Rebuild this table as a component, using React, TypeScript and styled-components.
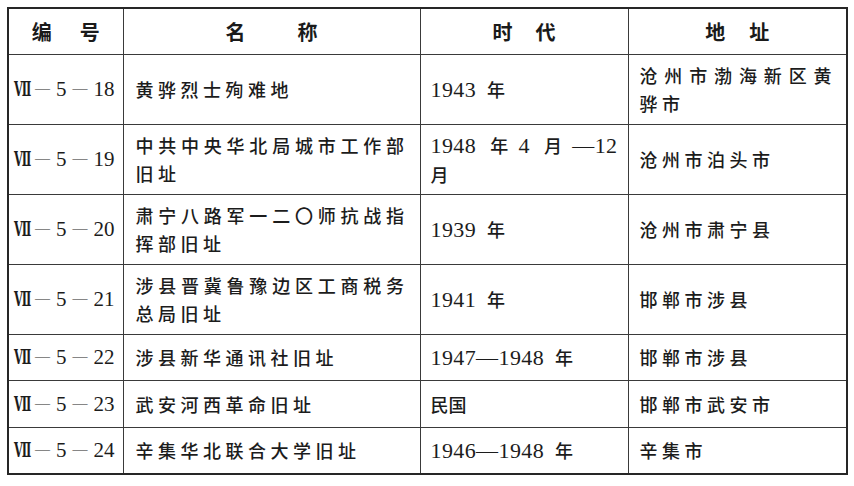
import React from "react";
import styled, { createGlobalStyle } from "styled-components";

const GlobalStyle = createGlobalStyle`
  html, body { margin: 0; padding: 0; background: #ffffff; }
  body {
    font-family: "Liberation Serif", "Noto Sans CJK SC", serif;
    color: #1c1c1c;
  }
`;

const Page = styled.div`
  padding: 7px 0 0 7px;
`;

const Table = styled.table`
  border-collapse: collapse;
  table-layout: fixed;
  width: 839px;
  border: 2px solid #262626;
`;

const Col = styled.col<{ $w: number }>`
  width: ${(p) => p.$w}px;
`;

const Row = styled.tr<{ $h: number }>`
  height: ${(p) => p.$h}px;
`;

const HeadCell = styled.th`
  padding: 0;
  border: 1px solid #3a3a3a;
  font-family: "Noto Sans CJK SC", sans-serif;
  font-weight: 700;
  font-size: 20px;
  color: #1a1a1a;
  vertical-align: middle;
`;

const HeadInner = styled.div<{ $gap: number }>`
  display: flex;
  justify-content: center;
  gap: ${(p) => p.$gap}px;
`;

const CodeCell = styled.td`
  padding: 0 3px 0 0;
  border: 1px solid #3a3a3a;
  font-family: "Liberation Serif", "DejaVu Serif", serif;
  font-size: 21px;
  white-space: nowrap;
  text-align: center;
  vertical-align: middle;
`;

const Roman = styled.span`
  display: inline-block;
  width: 15px;
  font-weight: 700;
  transform: scaleX(0.54);
  transform-origin: left center;
  white-space: nowrap;
`;

const Dash = styled.span`
  display: inline-block;
  font-size: 15px;
  margin: 0 6px;
  vertical-align: 3px;
`;

const TextCell = styled.td<{ $pl: number; $pr: number }>`
  padding: 0 ${(p) => p.$pr}px 0 ${(p) => p.$pl}px;
  border: 1px solid #3a3a3a;
  font-family: "Noto Sans CJK SC", sans-serif;
  font-weight: 500;
  font-size: 18px;
  letter-spacing: 4.5px;
  line-height: 28px;
  text-align: justify;
  vertical-align: middle;
`;

const DateCell = styled.td`
  padding: 0 10px;
  border: 1px solid #3a3a3a;
  font-family: "Noto Sans CJK SC", sans-serif;
  font-weight: 500;
  font-size: 18px;
  line-height: 28px;
  text-align: justify;
  vertical-align: middle;
`;

const Digits = styled.span`
  font-family: "Liberation Serif", serif;
  font-weight: 400;
  font-size: 22px;
  letter-spacing: 0.4px;
  word-spacing: 5px;
`;

const JustLine = styled.span`
  display: block;
  text-align: justify;
  text-align-last: justify;
`;

const mixed = (text: string) =>
  text.split(/([0-9—]+ ?)/).map((part, i) =>
    /^[0-9—]+ ?$/.test(part) ? (
      <Digits key={i}>{part}</Digits>
    ) : (
      <React.Fragment key={i}>{part}</React.Fragment>
    )
  );

const codeParts = (code: string) => {
  const [roman, ...rest] = code.split("—");
  return (
    <>
      <Roman>{roman}</Roman>
      {rest.map((p, i) => (
        <React.Fragment key={i}>
          <Dash>—</Dash>
          {p}
        </React.Fragment>
      ))}
    </>
  );
};

type Item = {
  code: string;
  name: string;
  date: string;
  dateLines?: [string, string];
  addr: string;
  h: number;
};

const rows: Item[] = [
  { code: "Ⅶ—5—18", name: "黄骅烈士殉难地", date: "1943 年", addr: "沧州市渤海新区黄骅市", h: 70 },
  {
    code: "Ⅶ—5—19",
    name: "中共中央华北局城市工作部旧址",
    date: "1948 年 4 月—12 月",
    dateLines: ["1948 年 4 月 —12", "月"],
    addr: "沧州市泊头市",
    h: 70,
  },
  { code: "Ⅶ—5—20", name: "肃宁八路军一二〇师抗战指挥部旧址", date: "1939 年", addr: "沧州市肃宁县", h: 70 },
  { code: "Ⅶ—5—21", name: "涉县晋冀鲁豫边区工商税务总局旧址", date: "1941 年", addr: "邯郸市涉县", h: 70 },
  { code: "Ⅶ—5—22", name: "涉县新华通讯社旧址", date: "1947—1948 年", addr: "邯郸市涉县", h: 46 },
  { code: "Ⅶ—5—23", name: "武安河西革命旧址", date: "民国", addr: "邯郸市武安市", h: 47 },
  { code: "Ⅶ—5—24", name: "辛集华北联合大学旧址", date: "1946—1948 年", addr: "辛集市", h: 47 },
];

const headers: { a: string; b: string; gap: number }[] = [
  { a: "编", b: "号", gap: 28 },
  { a: "名", b: "称", gap: 52 },
  { a: "时", b: "代", gap: 23 },
  { a: "地", b: "址", gap: 24 },
];

export default function App() {
  return (
    <>
      <GlobalStyle />
      <Page>
        <Table>
          <colgroup>
            <Col $w={115} />
            <Col $w={297} />
            <Col $w={208} />
            <Col $w={219} />
          </colgroup>
          <thead>
            <Row $h={46}>
              {headers.map((h) => (
                <HeadCell key={h.a}>
                  <HeadInner $gap={h.gap}>
                    <span>{h.a}</span>
                    <span>{h.b}</span>
                  </HeadInner>
                </HeadCell>
              ))}
            </Row>
          </thead>
          <tbody>
            {rows.map((r) => (
              <Row key={r.code} $h={r.h}>
                <CodeCell>{codeParts(r.code)}</CodeCell>
                <TextCell $pl={12} $pr={11}>{r.name}</TextCell>
                <DateCell>
                  {r.dateLines ? (
                    <>
                      <JustLine>{mixed(r.dateLines[0])}</JustLine>
                      {mixed(r.dateLines[1])}
                    </>
                  ) : (
                    mixed(r.date)
                  )}
                </DateCell>
                <TextCell $pl={11} $pr={10}>{r.addr}</TextCell>
              </Row>
            ))}
          </tbody>
        </Table>
      </Page>
    </>
  );
}
